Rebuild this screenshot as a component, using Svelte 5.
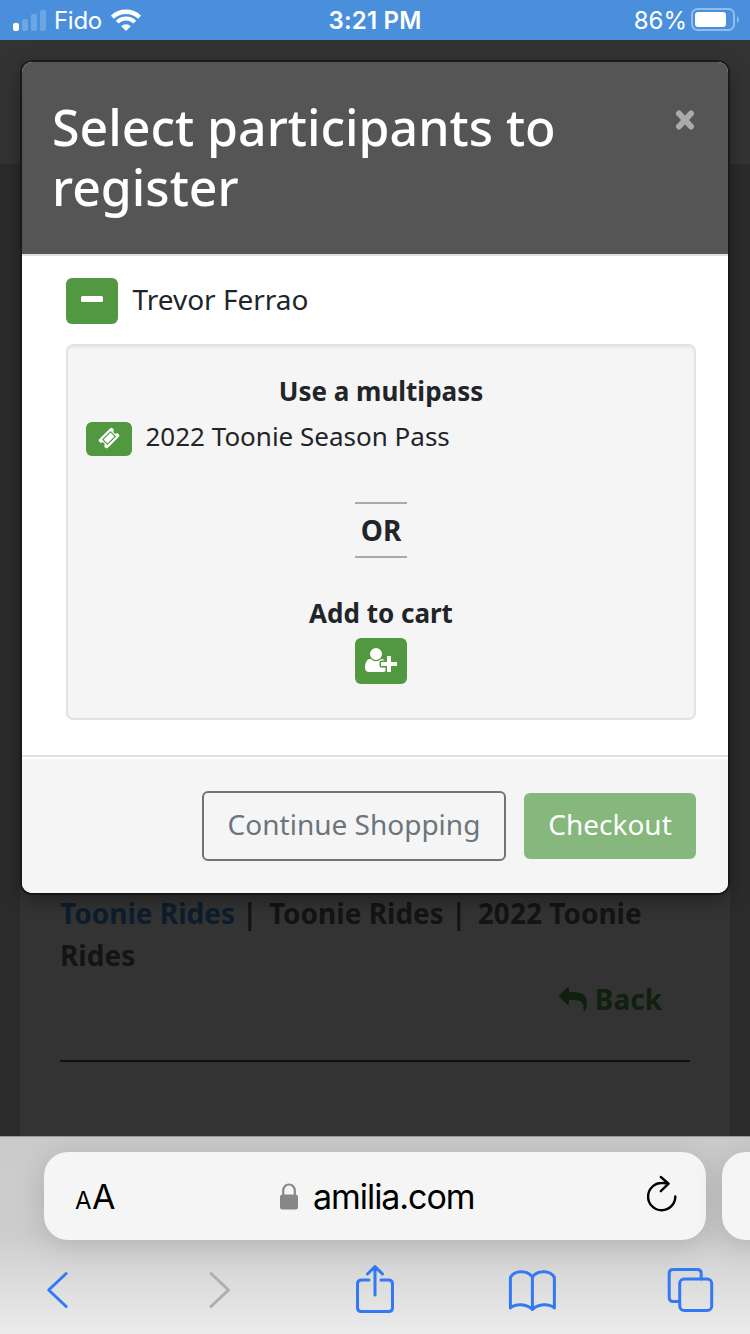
<script lang="ts">
	interface Pass {
		id: number;
		name: string;
	}

	const participant = 'Trevor Ferrao';
	const passes: Pass[] = [{ id: 1, name: '2022 Toonie Season Pass' }];
	const signalBars = [8, 12, 17, 21];
</script>

<div class="screen">
	<div class="status-bar">
		<div class="carrier">
			<div class="signal">
				{#each signalBars as height, i}
					<span class:on={i === 0} style="height: {height}px"></span>
				{/each}
			</div>
			<span class="carrier-name">Fido</span>
			<svg class="wifi" width="30" height="22" viewBox="0 0 30 22" fill="none" stroke="#fff">
				<path d="M1.4 8.2A19.6 19.6 0 0 1 28.6 8.2" stroke-width="4.4" />
				<path d="M6.2 13.1A12.6 12.6 0 0 1 23.8 13.1" stroke-width="4" />
				<path d="M15 22L10.2 17.2A6.8 6.8 0 0 1 19.8 17.2Z" fill="#fff" stroke="none" />
			</svg>
		</div>
		<span class="clock">3:21 PM</span>
		<div class="battery">
			<span>86%</span>
			<svg width="49" height="24" viewBox="0 0 49 24">
				<rect x="1" y="1" width="42" height="21" rx="5.5" fill="none" stroke="#fff" stroke-opacity=".4" stroke-width="2" />
				<rect x="4" y="4" width="31" height="15" rx="3" fill="#fff" />
				<path d="M46 8Q48 9 48 11.5T46 15Z" fill="#fff" fill-opacity=".4" />
			</svg>
		</div>
	</div>

	<div class="page">
		<div class="page-card">
			<div class="crumbs">
				<a href="#toonie">Toonie Rides</a><i>|</i><span>Toonie Rides</span><i>|</i><span>2022 Toonie</span>
				<span>Rides</span>
			</div>
			<div class="back">
				<svg width="28" height="28" viewBox="0 0 1792 1792" fill="currentColor">
					<path
						d="M1792 1120q0 166-127 451-3 7-10.500 24t-13.500 30-13 22q-12 17-28 17-15 0-23.500-10t-8.500-25q0-9 2.500-26.500t2.500-23.500q5-68 5-123 0-101-17.500-181t-48.500-138.500-80-101-105.500-69.500-133-42.500-154-21.500-175.500-6h-224v256q0 26-19 45t-45 19-45-19l-512-512q-19-19-19-45t19-45l512-512q19-19 45-19t45 19 19 45v256h224q713 0 875 403 53 134 53 333z"
					/>
				</svg>
				<span>Back</span>
			</div>
			<hr />
		</div>

		<div class="modal" role="dialog" aria-label="Select participants">
			<header>
				<h1>Select participants to register</h1>
				<button class="close" aria-label="Close">
					<svg width="20" height="22" viewBox="0 0 20 22" stroke="currentColor" stroke-width="6" stroke-linecap="round">
						<path d="M4 4.500L16 17.500M16 4.500L4 17.500" />
					</svg>
				</button>
			</header>

			<div class="body">
				<div class="participant">
					<button class="btn-icon" aria-label="Collapse"><span class="minus"></span></button>
					<span class="name">{participant}</span>
				</div>

				<div class="well">
					<h2>Use a multipass</h2>
					{#each passes as pass (pass.id)}
						<div class="pass">
							<button class="btn-icon small" aria-label="Use pass">
								<svg width="22" height="22" viewBox="0 0 1792 1792" fill="currentColor">
									<path
										d="M1024 452l316 316-572 572-316-316zm-211 979l618-618q19-19 19-45t-19-45l-362-362q-18-18-45-18t-45 18l-618 618q-19 19-19 45t19 45l362 362q18 18 45 18t45-18zm889-637l-907 908q-37 37-90.500 37t-90.500-37l-126-125q56-56 56-136t-56-136-136-56-136 56l-125-126q-37-37-37-90.500t37-90.500l907-906q37-37 90.500-37t90.500 37l125 125q-56 56-56 136t56 136 136 56 136-56l126 125q37 37 37 90.500t-37 90.500z"
									/>
								</svg>
							</button>
							<span>{pass.name}</span>
						</div>
					{/each}
					<div class="or">OR</div>
					<h2>Add to cart</h2>
					<button class="btn-icon add" aria-label="Add to cart">
						<svg width="32" height="28" viewBox="0 0 2048 1792" fill="currentColor">
							<path
								d="M704 896q-159 0-271.500-112.500t-112.500-271.500 112.500-271.500 271.500-112.500 271.500 112.500 112.500 271.500-112.500 271.500-271.500 112.500zm960 128h352q13 0 22.500 9.500t9.500 22.500v192q0 13-9.500 22.500t-22.500 9.500h-352v352q0 13-9.500 22.500t-22.500 9.500h-192q-13 0-22.500-9.500t-9.500-22.500v-352h-352q-13 0-22.500-9.500t-9.500-22.500v-192q0-13 9.500-22.500t22.500-9.500h352v-352q0-13 9.500-22.500t22.500-9.500h192q13 0 22.500 9.500t9.500 22.500v352zm-736 224q0 52 38 90t90 38h256v238q-68 50-171 50h-874q-121 0-194-69t-73-190q0-53 3.500-103.500t14-109 26.500-108.500 43-97.500 62-81 85.500-53.500 111.500-20q19 0 39 17 79 61 154.500 91.500t164.500 30.500 164.500-30.500 154.500-91.500q20-17 39-17 132 0 217 96h-223q-52 0-90 38t-38 90v192z"
							/>
						</svg>
					</button>
				</div>
			</div>

			<footer>
				<button class="btn outline">Continue Shopping</button>
				<button class="btn primary" disabled>Checkout</button>
			</footer>
		</div>
	</div>

	<div class="browser-bar">
		<div class="tabs">
			<div class="address">
				<span class="text-size"><small>A</small>A</span>
				<div class="domain">
					<svg width="18" height="27" viewBox="0 0 18 27">
						<path d="M3.200 13V7.500a5.800 6 0 0 1 11.600 0V13" fill="none" stroke="#87868b" stroke-width="2.200" />
						<rect y="11.500" width="18" height="15" rx="2.500" fill="#87868b" />
					</svg>
					<span>amilia.com</span>
				</div>
				<svg class="reload" width="32" height="38" viewBox="0 0 32 38" fill="none" stroke="#000" stroke-width="2.400" stroke-linecap="round" stroke-linejoin="round">
					<path d="M29.300 21.500A13.600 13.600 0 1 1 15.700 8Q19 7.800 22 8.600M14.800 2L22.600 8.700L14.800 16.200" />
				</svg>
			</div>
			<div class="next-tab"></div>
		</div>
		<nav>
			<svg viewBox="-13.7 0 50 50">
				<path d="M20.500 8.500L3 25L20.500 41.500" />
			</svg>
			<svg class="muted" viewBox="-17.5 0 50 50">
				<path d="M3.500 8.500L21 25L3.500 41.500" />
			</svg>
			<svg viewBox="-6 0 50 50">
				<path d="M14 15H6.500Q2.500 15 2.500 19V42.500Q2.500 46.500 6.500 46.500H33.500Q37.500 46.500 37.500 42.500V19Q37.500 15 33.500 15H26" />
				<path d="M20 30V2M12.500 9L20 1.500L27.500 9" />
			</svg>
			<svg viewBox="-0.4 0 50 50">
				<path d="M25 44.500V12C20 5 7 5 3 12.500V43C8 38.500 19 38.500 25 44.500C31 38.500 42 38.500 47 43V12.500C43 5 30 5 25 12" />
			</svg>
			<svg viewBox="-1.2 0 50 50">
				<rect x="12.500" y="14" width="32" height="31.500" rx="4.500" />
				<path d="M34 14V8.500Q34 4.500 30 4.500H6Q2 4.500 2 8.500V32Q2 36.500 6 36.500H12.500" />
			</svg>
		</nav>
	</div>
</div>

<style>
	:global(body) {
		margin: 0;
	}

	.screen {
		display: flex;
		flex-direction: column;
		width: 750px;
		height: 1334px;
		overflow: hidden;
		font-family: 'Noto Sans', sans-serif;
		font-size: 28px;
		color: #212529;
	}

	button {
		font: inherit;
		padding: 0;
		border: 0;
	}

	svg {
		display: block;
		flex: none;
	}

	.status-bar {
		display: grid;
		grid-template-columns: 1fr auto 1fr;
		align-items: center;
		height: 40px;
		padding: 0 10px 0 13px;
		box-sizing: border-box;
		background: #4a8fdc;
		color: #fff;
		font-family: Inter, sans-serif;
		font-size: 24px;
	}

	.carrier,
	.battery {
		display: flex;
		align-items: center;
	}

	.signal {
		display: flex;
		align-items: flex-end;
		gap: 3px;
		height: 21px;
		margin-right: 8px;
	}

	.signal span {
		width: 6px;
		border-radius: 2px;
		background: rgba(255, 255, 255, 0.2);
	}

	.signal .on {
		background: #fff;
	}

	.carrier-name {
		letter-spacing: -0.3px;
	}

	.wifi {
		margin-left: 9.5px;
	}

	.clock {
		margin-right: 3px;
		font-weight: 600;
		letter-spacing: 0.2px;
	}

	.battery {
		justify-content: flex-end;
		gap: 4px;
	}

	.page {
		position: relative;
		flex: 1;
		display: flex;
		padding: 124px 20px 0;
		background: linear-gradient(#333 124px, #2b2b2b 124px);
	}

	.page-card {
		flex: 1;
		padding: 728px 40px 0;
		background: #333;
		color: #141414;
		font-weight: 700;
		line-height: 42px;
	}

	.crumbs a {
		color: #0d1d2d;
		text-decoration: none;
	}

	.crumbs i {
		margin: 0 11.5px 0 7px;
		font-style: normal;
	}

	.back {
		display: flex;
		align-items: center;
		justify-content: flex-end;
		gap: 8px;
		margin-top: 2px;
		padding-right: 28px;
		color: #10200e;
	}

	.back span {
		margin-bottom: 2px;
	}

	.page-card hr {
		margin: 38px 0 0;
		border: 0;
		border-top: 2px solid #111;
	}

	.modal {
		position: absolute;
		top: 22px;
		left: 22px;
		width: 706px;
		height: 831px;
		display: flex;
		flex-direction: column;
		border-radius: 10px;
		overflow: hidden;
		background: #fff;
		box-shadow:
			0 0 0 2px rgba(0, 0, 0, 0.4),
			0 6px 20px rgba(0, 0, 0, 0.4);
	}

	header {
		display: flex;
		justify-content: space-between;
		align-items: flex-start;
		height: 192px;
		padding: 35px 33px 0 30px;
		box-sizing: border-box;
		background: #555;
		color: #fff;
	}

	h1 {
		width: 560px;
		margin: 0;
		font-size: 50px;
		font-weight: 500;
		line-height: 60px;
	}

	.close {
		margin-top: 12px;
		background: none;
		color: #aaa;
	}

	.body {
		flex: 1;
		padding: 22px 32px 0 44px;
		border-top: 2px solid #dee2e6;
		border-bottom: 2px solid #dee2e6;
	}

	.participant {
		display: flex;
		align-items: center;
		gap: 14.5px;
		margin-bottom: 20px;
	}

	.name {
		margin-bottom: 4px;
	}

	.btn-icon {
		display: flex;
		align-items: center;
		justify-content: center;
		width: 52px;
		height: 46px;
		border-radius: 6px;
		background: #519841;
		color: #fff;
	}

	.btn-icon svg {
		margin-bottom: 2px;
	}

	.minus {
		width: 22px;
		height: 6px;
		margin-bottom: 4px;
		border-radius: 1.5px;
		background: #fff;
	}

	.well {
		display: flex;
		flex-direction: column;
		align-items: center;
		height: 376px;
		padding: 26px 18px 0;
		box-sizing: border-box;
		border: 2px solid #e3e3e3;
		border-radius: 7px;
		background: #f5f5f5;
		box-shadow: inset 0 2px 2px rgba(0, 0, 0, 0.05);
	}

	h2 {
		margin: 0;
		font-size: 26px;
		line-height: 39px;
	}

	.pass {
		display: flex;
		align-items: center;
		align-self: stretch;
		gap: 13.5px;
		margin: 5px 0 46px;
		font-size: 26px;
		line-height: 40px;
	}

	.small {
		width: 46px;
		height: 34px;
		margin-top: 5px;
	}

	.or {
		width: 52px;
		margin-bottom: 36px;
		border-top: 2px solid #aaa;
		border-bottom: 2px solid #aaa;
		font-weight: 700;
		line-height: 52px;
		text-align: center;
	}

	.add {
		margin-top: 5px;
	}

	footer {
		display: flex;
		align-items: center;
		justify-content: flex-end;
		gap: 18px;
		height: 134px;
		margin-top: 2px;
		padding-right: 32px;
		background: #f5f5f5;
	}

	.btn {
		box-sizing: border-box;
		padding-bottom: 4px;
		border-radius: 6px;
	}

	.outline {
		width: 304px;
		height: 70px;
		border: 2px solid #6c757d;
		background: none;
		color: #6c757d;
	}

	.primary {
		width: 172px;
		height: 66px;
		background: #86b77d;
		color: #fff;
	}

	.browser-bar {
		height: 198px;
		box-sizing: border-box;
		overflow: hidden;
		border-top: 1px solid #999;
		background: linear-gradient(#cbcbcb, #cdcdcd 50%, #ececec);
		font-family: Inter, sans-serif;
	}

	.tabs {
		display: flex;
		gap: 16px;
		padding: 15px 0 0 44px;
	}

	.address,
	.next-tab {
		flex: none;
		height: 88px;
		box-sizing: border-box;
		border-radius: 24px;
		background: #f5f5f5;
		box-shadow: 0 4px 30px rgba(0, 0, 0, 0.15);
	}

	.address {
		display: flex;
		align-items: center;
		justify-content: space-between;
		width: 662px;
		padding: 0 28px 0 31px;
		color: #000;
	}

	.next-tab {
		width: 60px;
	}

	.text-size {
		font-size: 34px;
		letter-spacing: -0.5px;
	}

	.text-size small {
		margin-right: 1px;
		font-size: 24px;
	}

	.domain {
		display: flex;
		align-items: center;
		gap: 14.5px;
		margin-right: 6px;
		font-size: 34px;
		letter-spacing: -1.05px;
	}

	.reload {
		margin-bottom: 4px;
	}

	nav {
		display: flex;
		justify-content: space-between;
		padding: 25px 34.5px 0 32px;
	}

	nav svg {
		width: 50px;
		height: 50px;
		fill: none;
		stroke: #3379f6;
		stroke-width: 3;
		stroke-linecap: round;
		stroke-linejoin: round;
	}

	nav .muted {
		stroke: #aeaeae;
	}
</style>
